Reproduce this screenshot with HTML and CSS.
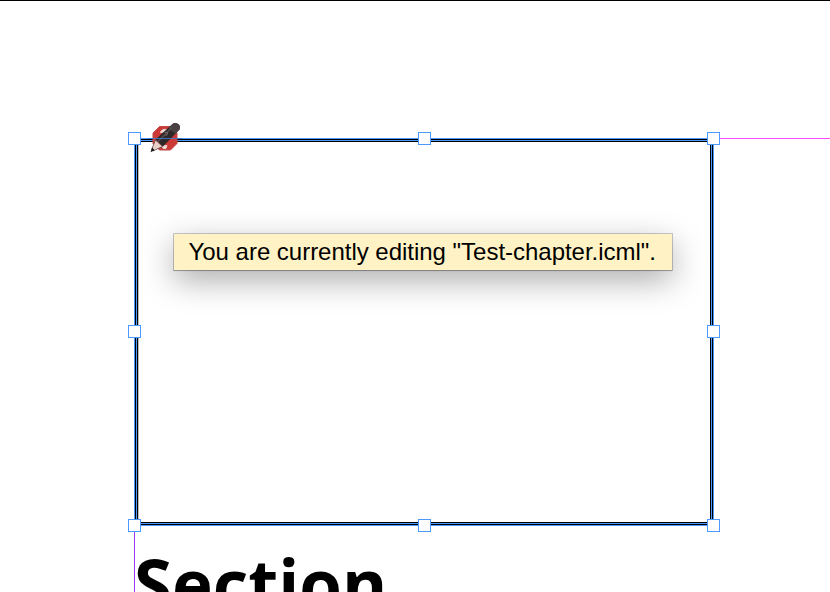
FILE: index.html
```html
<!DOCTYPE html>
<html lang="en">
<head>
<meta charset="utf-8">
<title>Test-chapter</title>
<link rel="stylesheet" href="styles.css">
</head>
<body>
<main class="canvas">
  <svg class="guides" width="830" height="592" shape-rendering="crispEdges" aria-hidden="true">
    <path fill="#ff4bff" d="M714 138h116v1H714z"/>
    <path fill="#9b37ff" d="M134 526h1v66h-1z"/>
    <path fill="#bbb" d="M138 142h1v380h-1z"/>
    <g fill="none" stroke="#000">
      <rect x="135.500" y="139.500" width="577" height="385"/>
      <rect x="137.500" y="141.500" width="573" height="381"/>
    </g>
    <g fill="none" stroke="#4b98ff">
      <rect x="134.500" y="138.500" width="579" height="387"/>
      <rect x="136.500" y="140.500" width="575" height="383"/>
    </g>
  </svg>
  <svg class="badge" width="34" height="34" viewBox="148 121 34 34" aria-hidden="true">
    <path d="M159.500 126.500h11l6.500 6.500v10.500l-6.500 6.500h-11l-6.500-6.500v-10.500z" fill="#cb3a36" stroke="#bd4a46"/>
    <path d="M160.500 133c0-4.500 8-5 8.500-1M162 145.500h5l-1 3h-3z" fill="#f0dedb" stroke="#e8cfcc"/>
    <path d="M172 124.500q3-2.500 6-.500 3 2 1.500 5.500l-16.500 17-7.500-7z" fill="#2f2829"/>
    <path d="M172 124.500q3-2.500 6-.500 3 2 1.500 5.500l-4 4.500-7-6z" fill="#484342"/>
    <path d="M158 141.500l14-14" stroke="#5b5153" stroke-width="1.200"/>
    <path d="M165 132.500q3-1 2.500 1.500l-2 2" fill="none" stroke="#777072" stroke-width="1"/>
    <path d="M155.500 140l7 6.500-9.500 4.500-1.500-1.500z" fill="#e9cfc9" stroke="#4b3b3c" stroke-width=".7"/>
    <path d="M152.200 147.500l2.300 2.700-4 2z" fill="#111"/>
    <path d="M148 138h34v1h-34z" fill="#377bd8" opacity=".85"/>
  </svg>
  <svg class="handles" width="830" height="592" shape-rendering="crispEdges" fill="#fff" stroke="#4b98ff" aria-hidden="true">
    <rect x="128.500" y="132.500" width="12" height="12"/>
    <rect x="418.500" y="132.500" width="12" height="12"/>
    <rect x="707.500" y="132.500" width="12" height="12"/>
    <rect x="128.500" y="325.500" width="12" height="12"/>
    <rect x="707.500" y="325.500" width="12" height="12"/>
    <rect x="128.500" y="519.500" width="12" height="12"/>
    <rect x="418.500" y="519.500" width="12" height="12"/>
    <rect x="707.500" y="519.500" width="12" height="12"/>
  </svg>
  <div class="tooltip" role="tooltip">You are currently editing "Test-chapter.icml".</div>
  <h1 class="heading">Section</h1>
</main>
</body>
</html>
```
FILE: styles.css
```css
body {
  margin: 0;
  background: #fff;
}

.canvas {
  position: relative;
  box-sizing: border-box;
  width: 830px;
  height: 592px;
  overflow: hidden;
  border-top: 1px solid #000;
}

.guides,
.handles {
  position: absolute;
  top: -1px;
  left: 0;
}

.badge {
  position: absolute;
  top: 120px;
  left: 148px;
}

.tooltip {
  position: absolute;
  top: 233px;
  left: 174px;
  box-sizing: border-box;
  width: 498px;
  height: 36px;
  padding-left: 14.5px;
  background: #fff3c5;
  box-shadow: 0 0 0 1px rgba(0, 0, 0, .2), 0 1px 1px rgba(0, 0, 0, .15), 0 10px 32px rgba(0, 0, 0, .34);
  color: #000;
  font: 24px/35px "Liberation Sans", sans-serif;
  letter-spacing: -.02px;
  white-space: nowrap;
}

.heading {
  position: absolute;
  top: 537px;
  left: 134px;
  margin: 0;
  color: #000;
  font: 700 69px/90px "Open Sans", sans-serif;
}
```
